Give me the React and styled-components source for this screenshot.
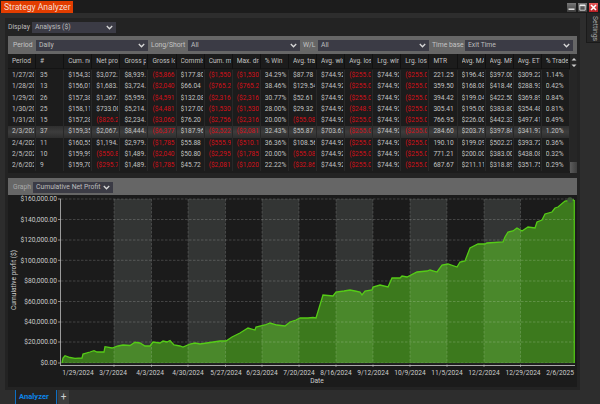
import React from 'react';
import styled, { createGlobalStyle } from 'styled-components';

const GlobalStyle = createGlobalStyle`
  html, body { margin: 0; padding: 0; background: #2d2d2d; }
  * { box-sizing: border-box; }
`;

const Page = styled.div`
  width: 600px;
  height: 404px;
  display: flex;
  flex-direction: column;
  overflow: hidden;
  background: #2d2d2d;
  color: #bdbdbd;
  font-family: Roboto, "Noto Sans", sans-serif;
  font-size: 6.8px;
`;

const TitleBar = styled.div`
  height: 13px;
  flex: none;
  display: flex;
  justify-content: space-between;
  padding: 1px 2px 0 1px;
  background: #1c1c1c;
`;

const TitleTab = styled.div`
  width: 72px;
  height: 12px;
  line-height: 12px;
  padding-left: 3px;
  background: #e23d00;
  color: #f6ddd2;
  font-size: 8.6px;
  white-space: nowrap;
`;

const WinButtons = styled.div`
  display: flex;
  gap: 2px;
  padding-top: 2px;
`;

const WinButton = styled.div`
  width: 9px;
  height: 9px;
  display: flex;
  align-items: center;
  justify-content: center;
  background: ${p => (p.$close ? 'linear-gradient(#e85a5a, #b81f24)' : 'linear-gradient(#777, #3c3c3c)')};
`;

const Body = styled.div`
  flex: 1;
  display: flex;
  min-height: 0;
  padding-top: 5px;
`;

const Main = styled.div`
  width: 575px;
  margin-left: 5px;
  padding: 2px 3px 3px;
  display: flex;
  flex-direction: column;
  background: #232323;
`;

const Side = styled.div`
  flex: 1;
  margin-top: -5px;
  padding-left: 6px;
`;

const SettingsTab = styled.div`
  width: 14px;
  height: 30px;
  writing-mode: vertical-rl;
  background: #262626;
  border-left: 1px solid #1a1a1a;
  border-bottom: 1px solid #1a1a1a;
  color: #a8a8a8;
  font-size: 6.9px;
  line-height: 11px;
  padding-top: 3px;
`;

const DisplayRow = styled.div`
  height: 14px;
  display: flex;
  align-items: center;
  gap: 3px;
  margin-bottom: 2px;
`;

const FilterBar = styled.div`
  height: 18px;
  display: flex;
  align-items: center;
  padding: 0 4px 0 5px;
  gap: 3px;
  background: #666;
  color: #c4c4c4;
`;

const GraphBar = styled(FilterBar)`
  height: 17px;
  margin-top: 5px;
  padding-top: 1px;
  color: #a8a8a8;
`;

const Label = styled.span`
  white-space: nowrap;
  width: ${p => p.$w}px;
  flex: none;
`;

const SelectBox = styled.div`
  width: ${p => p.$w}px;
  height: 11px;
  flex: none;
  display: flex;
  align-items: center;
  justify-content: space-between;
  padding: 0 3px;
  background: #3b3b45;
  color: #bdbdbd;
  white-space: nowrap;
`;

const TableArea = styled.div`
  display: flex;
  height: 119px;
  background: #1c1c1c;
`;

const Table = styled.div`
  width: 562px;
  flex: none;
`;

const Row = styled.div`
  display: grid;
  grid-template-columns: repeat(20, 28.1px);
  height: ${p => (p.$head ? '15px' : '11.25px')};
  line-height: ${p => (p.$head ? '15px' : '11.25px')};
  background: ${p => (p.$active ? 'linear-gradient(#2e2e2e, #3d3d3d 50%, #2e2e2e)' : 'transparent')};
  margin-bottom: ${p => (p.$head ? '1px' : '0')};
  border-bottom: ${p => (p.$head ? '1px solid #141414' : 'none')};
`;

const Cell = styled.div`
  min-width: 0;
  padding-left: 4px;
  border-right: 1px solid ${p => (p.$head ? '#111' : '#282828')};
`;

const CellText = styled.div`
  overflow: hidden;
  white-space: nowrap;
  margin-right: 1px;
  font-size: 6.6px;
  color: ${p => (p.$neg ? '#d4101a' : '#c2c2c2')};
`;

const ScrollBar = styled.div`
  flex: 1;
  display: flex;
  flex-direction: column;
  align-items: center;
  justify-content: space-between;
  background: #262626;
  padding-top: 3px;
`;

const ScrollThumb = styled.div`
  width: 100%;
  height: 11px;
  background: linear-gradient(90deg, #5c5c5c, #3f3f3f);
`;

const ChartSvg = styled.svg`
  display: block;
  width: 569px;
  height: 192px;
  background: #1b1b1b;
`;

const AxisText = styled.text`
  fill: #cdcdcd;
  font-size: 6.6px;
  font-family: Roboto, "Noto Sans", sans-serif;
`;

const TabStrip = styled.div`
  height: 14px;
  flex: none;
  display: flex;
  padding-left: 15px;
  background: #2d2d2d;
`;

const ActiveTab = styled.div`
  width: 42px;
  padding-left: 3px;
  line-height: 13px;
  color: #0d84e8;
  font-size: 7.6px;
  font-weight: 700;
  background: #232323;
  border-left: 1px solid #0d6fc4;
  border-right: 1px solid #0d6fc4;
`;

const AddTab = styled.div`
  width: 11px;
  margin-left: 1px;
  background: #3d3d3d;
  color: #cfcfcf;
  text-align: center;
  line-height: 13px;
  font-size: 10px;
`;

const columns = ['Period', '#', 'Cum. net profit', 'Net profit', 'Gross profit', 'Gross loss', 'Commission', 'Cum. max', 'Max. drawdown', '% Win', 'Avg. trade', 'Avg. winner', 'Avg. loser', 'Lrg. winner', 'Lrg. loser', 'MTR', 'Avg. MAE', 'Avg. MFE', 'Avg. ETD', '% Trade'];

const rows = [
  ['1/27/2025', '35', '$154,338.25', '$3,072.20', '$8,939.00', '($5,866.80)', '$177.80', '($1,550.00)', '($1,530.00)', '34.29%', '$87.78', '$744.92', '($255.08)', '$744.92', '($255.08)', '221.25', '$196.43', '$397.00', '$309.22', '1.14%'],
  ['1/28/2025', '13', '$156,018.00', '$1,683.50', '$3,724.60', '($2,040.60)', '$66.04', '($765.24)', '($765.24)', '38.46%', '$129.54', '$744.92', '($255.08)', '$744.92', '($255.08)', '359.50', '$168.08', '$418.46', '$288.93', '0.42%'],
  ['1/29/2025', '26', '$157,385.50', '$1,367.50', '$5,959.36', '($4,591.44)', '$132.08', '($2,316.00)', '($2,316.00)', '30.77%', '$52.61', '$744.92', '($255.08)', '$744.92', '($255.08)', '394.42', '$199.04', '$422.50', '$369.89', '0.84%'],
  ['1/30/2025', '25', '$158,118.00', '$733.00', '$5,214.44', '($4,481.44)', '$127.00', '($1,530.00)', '($1,530.00)', '28.00%', '$29.32', '$744.92', '($248.90)', '$744.92', '($255.08)', '305.41', '$195.00', '$383.80', '$354.48', '0.81%'],
  ['1/31/2025', '15', '$157,285.00', '($826.20)', '$2,234.76', '($3,060.96)', '$76.20', '($2,756.00)', '($2,316.00)', '20.00%', '($55.08)', '$744.92', '($255.08)', '$744.92', '($255.08)', '766.95', '$226.00', '$442.33', '$497.41', '0.49%'],
  ['2/3/2025', '37', '$159,355.00', '$2,067.40', '$8,444.00', '($6,377.00)', '$187.96', '($2,522.00)', '($2,081.00)', '32.43%', '$55.87', '$703.67', '($255.08)', '$744.92', '($255.08)', '284.60', '$203.78', '$397.84', '$341.97', '1.20%'],
  ['2/4/2025', '11', '$160,551.00', '$1,194.20', '$2,979.68', '($1,785.56)', '$55.88', '($555.90)', '($510.16)', '36.36%', '$108.56', '$744.92', '($255.08)', '$744.92', '($255.08)', '190.10', '$199.09', '$502.27', '$393.72', '0.36%'],
  ['2/5/2025', '10', '$159,999.00', '($550.80)', '$1,489.84', '($2,040.64)', '$50.80', '($2,295.00)', '($1,785.00)', '20.00%', '($55.08)', '$744.92', '($255.08)', '$744.92', '($255.08)', '771.21', '$200.00', '$383.00', '$438.08', '0.32%'],
  ['2/6/2025', '9', '$159,703.00', '($295.70)', '$1,489.84', '($1,785.56)', '$45.72', '($2,081.00)', '($1,020.00)', '22.22%', '($32.86)', '$744.92', '($255.08)', '$744.92', '($255.08)', '687.67', '$211.11', '$318.89', '$351.75', '0.29%'],
];

const yLabels = [
  ['$160,000.00', 199], ['$140,000.00', 219.5], ['$120,000.00', 240], ['$100,000.00', 260.3], ['$80,000.00', 281],
  ['$60,000.00', 301.5], ['$40,000.00', 322], ['$20,000.00', 342], ['$0.00', 363],
];

const xLabels = [
  ['1/29/2024', 78], ['3/7/2024', 113], ['4/3/2024', 150], ['4/30/2024', 188], ['5/27/2024', 226], ['6/23/2024', 262], ['7/20/2024', 299],
  ['8/16/2024', 336], ['9/12/2024', 373], ['10/9/2024', 410], ['11/5/2024', 447], ['12/2/2024', 484], ['12/29/2024', 523], ['2/6/2025', 560],
];

const vLines = [114, 151.5, 188, 225.5, 262, 299, 336, 373, 410, 447, 484, 520.5];
const bands = [[114, 151.5], [188, 225.5], [262, 299], [336, 373], [410, 447], [484, 520.5]];

// curve traced off the reference, in page pixels
const curve = '62,363 63,358 65,355.7 70,357.5 75,358.3 82,358 83,354 90,352 94,350.7 97,352 104,352 105,346.7 112,348 118,346 123,345 130,345.5 135,342.3 140,343 145,346 150,346 153,342 160,343 163,341 167,342 170,340.5 174,345 180,346 183,347 190,344 195,343 200,344 210,342.5 220,341 226,341 232,337 240,333 248,328 255,330 256,327 265,325 270,323 277,325 285,326 290,322 296,320 300,318 308,318 313,317.5 316,318 323,295 333,296 336,292 344,291 350,290 355,291 360,292 362,295 365,291 372,290 373,287 380,285 388,287 392,278 400,278 402,276 407,277 417,272 427,271 430,270 437,272 442,265 448,264 457,267 460,262 465,261 470,248 478,244 485,244 487,243 503,242 505,237 508,232 513,231 517,228 522,231 528,227 535,228 537,222 542,220 545,214 552,212 555,208 558,207 565,201 573,200 574,200';

const isNeg = value => value.startsWith('(');

const Chevron = () => (
  <svg width="7" height="5" viewBox="0 0 7 5">
    <path d="M.8 1 3.5 3.8 6.2 1" fill="none" stroke="#d8d8d8" strokeWidth="1.3" />
  </svg>
);

const Select = ({ w, children }) => (
  <SelectBox $w={w}>
    {children}
    <Chevron />
  </SelectBox>
);

const Chart = () => (
  <ChartSvg viewBox="8 195 569 192">
    {bands.map(([a, b]) => <rect key={a} x={a} y="199" width={b - a} height="164" fill="#333534" />)}
    <polygon points={`${curve} 574,363 62,363`} fill="rgb(105,246,33)" opacity="0.43" />
    {yLabels.map(([t, y]) => (
      <g key={t}>
        <line x1="58" x2="61" y1={y} y2={y} stroke="#aaa" strokeWidth="0.8" />
        <line x1="61" x2="574" y1={y} y2={y} stroke="#fff" strokeOpacity="0.26" strokeWidth="0.7" strokeDasharray="2.5 1.5" />
        <AxisText x="57" y={y + 2.4} textAnchor="end">{t}</AxisText>
      </g>
    ))}
    {vLines.map(x => (
      <g key={x}>
        <line x1={x} x2={x} y1="199" y2="363" stroke="#fff" strokeOpacity="0.22" strokeWidth="0.7" strokeDasharray="2.5 1.5" />
        <line x1={x} x2={x} y1="364" y2="367" stroke="#aaa" strokeWidth="0.7" />
      </g>
    ))}
    <polyline points={curve} fill="none" stroke="#55cc16" strokeWidth="1.3" />
    <line x1="574.3" x2="574.3" y1="200" y2="363" stroke="#55cc16" strokeWidth="1.2" />
    <line x1="61" x2="575" y1="363.8" y2="363.8" stroke="#222" strokeWidth="1.4" />
    <circle cx="570" cy="200" r="2.8" fill="#3f5a38" />
    <line x1="60.5" x2="60.5" y1="199" y2="366" stroke="#aaa" strokeWidth="0.9" />
    <line x1="60" x2="575" y1="365.5" y2="365.5" stroke="#bbb" strokeWidth="0.9" />
    {xLabels.map(([t, x]) => <AxisText key={t} x={x} y="375" textAnchor="middle">{t}</AxisText>)}
    <AxisText x="317" y="383" textAnchor="middle">Date</AxisText>
    <AxisText transform="translate(16 280) rotate(-90)" textAnchor="middle">Cumulative profit ($)</AxisText>
  </ChartSvg>
);

const App = () => (
  <Page>
    <GlobalStyle />
    <TitleBar>
      <TitleTab>Strategy Analyzer</TitleTab>
      <WinButtons>
        <WinButton>
          <svg width="7" height="7" viewBox="0 0 7 7"><rect x="0.5" y="4.5" width="6" height="1.4" fill="#eee" /></svg>
        </WinButton>
        <WinButton>
          <svg width="7" height="7" viewBox="0 0 7 7"><path d="M.8 1.2h5.4v5H.8z" fill="none" stroke="#ddd" strokeWidth="0.9" /><path d="M.8 1.4h5.4" stroke="#eee" strokeWidth="1.4" /></svg>
        </WinButton>
        <WinButton $close>
          <svg width="7" height="7" viewBox="0 0 7 7"><path d="M1 1l5 5M6 1L1 6" stroke="#fff" strokeWidth="1.6" /></svg>
        </WinButton>
      </WinButtons>
    </TitleBar>
    <Body>
      <Main>
        <DisplayRow>
          <Label $w={21}>Display</Label>
          <Select w={84}>Analysis ($)</Select>
        </DisplayRow>
        <FilterBar>
          <Label $w={20}>Period</Label>
          <Select w={112}>Daily</Select>
          <Label $w={34}>Long/Short</Label>
          <Select w={112}>All</Select>
          <Label $w={12}>W/L</Label>
          <Select w={111}>All</Select>
          <Label $w={30}>Time base</Label>
          <Select w={108}>Exit Time</Select>
        </FilterBar>
        <TableArea>
          <Table>
            <Row $head>
              {columns.map(c => <Cell key={c} $head><CellText>{c}</CellText></Cell>)}
            </Row>
            {rows.map(row => (
              <Row key={row[0]} $active={row[0] === '2/3/2025'}>
                {row.map((value, i) => <Cell key={i}><CellText $neg={isNeg(value)}>{value}</CellText></Cell>)}
              </Row>
            ))}
          </Table>
          <ScrollBar>
            <svg width="6" height="11" viewBox="0 0 6 11">
              <path d="M3 1 5.5 3.5H.5zM3 10 .5 7.5h5z" fill="#cfcfcf" />
            </svg>
            <ScrollThumb />
          </ScrollBar>
        </TableArea>
        <GraphBar>
          <Label $w={17}>Graph</Label>
          <Select w={80}>Cumulative Net Profit</Select>
        </GraphBar>
        <Chart />
      </Main>
      <Side>
        <SettingsTab>Settings</SettingsTab>
      </Side>
    </Body>
    <TabStrip>
      <ActiveTab>Analyzer</ActiveTab>
      <AddTab>+</AddTab>
    </TabStrip>
  </Page>
);

export default App;
